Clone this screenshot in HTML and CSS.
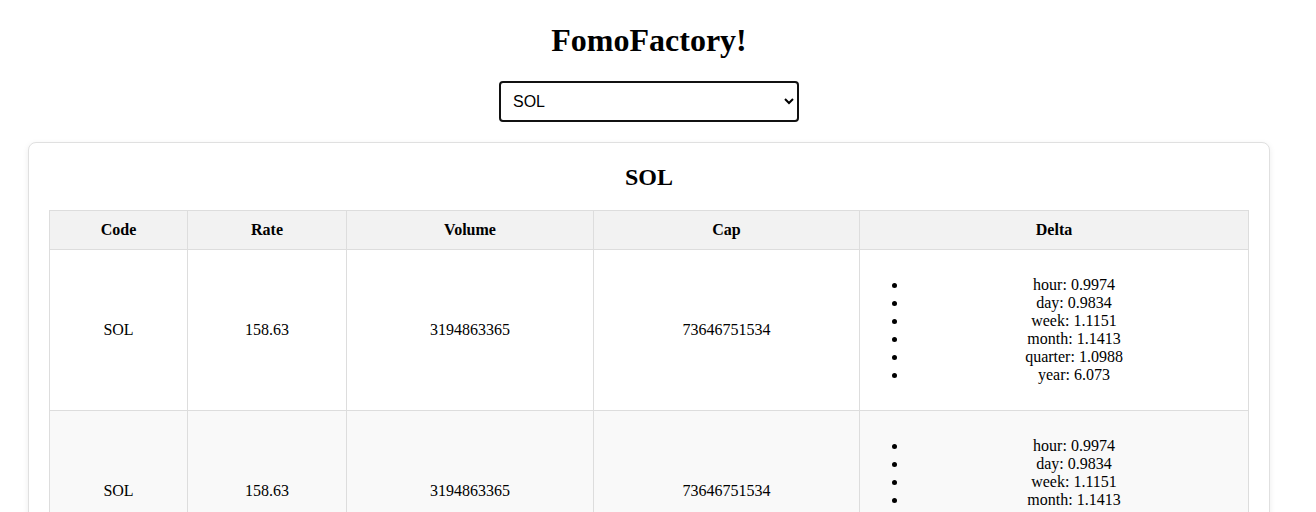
FILE: index.html
```html
<!DOCTYPE html>
<html>
<head>
<meta charset="utf-8">
<link rel="stylesheet" href="styles.css">
</head>
<body>
<div class="app">
  <h1 class="title">FomoFactory!</h1>
  <div class="picker">
    <select class="select">
      <option>SOL</option>
      <option>BTC</option>
      <option>ETH</option>
    </select>
  </div>
  <div class="card">
    <h2 class="card-title">SOL</h2>
    <table class="table">
      <colgroup>
        <col class="c-code"><col class="c-rate"><col class="c-vol"><col class="c-cap"><col class="c-delta">
      </colgroup>
      <thead>
        <tr><th>Code</th><th>Rate</th><th>Volume</th><th>Cap</th><th>Delta</th></tr>
      </thead>
      <tbody>
        <tr>
          <td>SOL</td><td>158.63</td><td>3194863365</td><td>73646751534</td>
          <td><ul class="delta">
            <li>hour: 0.9974</li><li>day: 0.9834</li><li>week: 1.1151</li><li>month: 1.1413</li><li>quarter: 1.0988</li><li>year: 6.073</li>
          </ul></td>
        </tr>
        <tr>
          <td>SOL</td><td>158.63</td><td>3194863365</td><td>73646751534</td>
          <td><ul class="delta">
            <li>hour: 0.9974</li><li>day: 0.9834</li><li>week: 1.1151</li><li>month: 1.1413</li><li>quarter: 1.0988</li><li>year: 6.073</li>
          </ul></td>
        </tr>
        <tr>
          <td>SOL</td><td>158.63</td><td>3194863365</td><td>73646751534</td>
          <td><ul class="delta">
            <li>hour: 0.9974</li><li>day: 0.9834</li><li>week: 1.1151</li><li>month: 1.1413</li><li>quarter: 1.0988</li><li>year: 6.073</li>
          </ul></td>
        </tr>
      </tbody>
    </table>
  </div>
</div>
</body>
</html>
```
FILE: styles.css
```css
html, body {
  margin: 0;
  background: #fff;
}
body {
  font-family: "Liberation Serif", "Times New Roman", serif;
  color: #000;
  padding: 0 46px 0 28px;
}
.app {
  display: flex;
  flex-direction: column;
  align-items: center;
}
.title {
  font-size: 32px;
  font-weight: bold;
  margin: 22px 0 22px;
  line-height: 37px;
}
.picker {
  margin-bottom: 20px;
}
.select {
  display: block;
  width: 300px;
  height: 41px;
  box-sizing: border-box;
  border: 2px solid #111;
  border-radius: 4px;
  padding: 0 8px 0 8px;
  font-family: "Liberation Sans", Arial, sans-serif;
  font-size: 16px;
  color: #000;
  background: #fff;
}
.card {
  align-self: stretch;
  border: 1px solid #e0e0e0;
  border-radius: 8px;
  box-shadow: 0 2px 6px rgba(0,0,0,0.08);
  padding: 20px;
  background: #fff;
}
.card-title {
  margin: 0 0 19px;
  text-align: center;
  font-size: 24px;
  line-height: 28px;
}
.table {
  width: 100%;
  border-collapse: collapse;
  table-layout: fixed;
  font-size: 16px;
}
.c-code { width: 138px; }
.c-rate { width: 159px; }
.c-vol { width: 247px; }
.c-cap { width: 266px; }
.c-delta { width: 389px; }
.table th, .table td {
  border: 1px solid #ddd;
  text-align: center;
  vertical-align: middle;
}
.table th {
  background: #f2f2f2;
  padding: 10px;
  font-weight: bold;
}
.table td {
  padding: 10px 8px;
}
.table tbody tr:nth-child(even) td {
  background: #f9f9f9;
}
.delta {
  margin: 16px 0;
  padding-left: 40px;
}
```
